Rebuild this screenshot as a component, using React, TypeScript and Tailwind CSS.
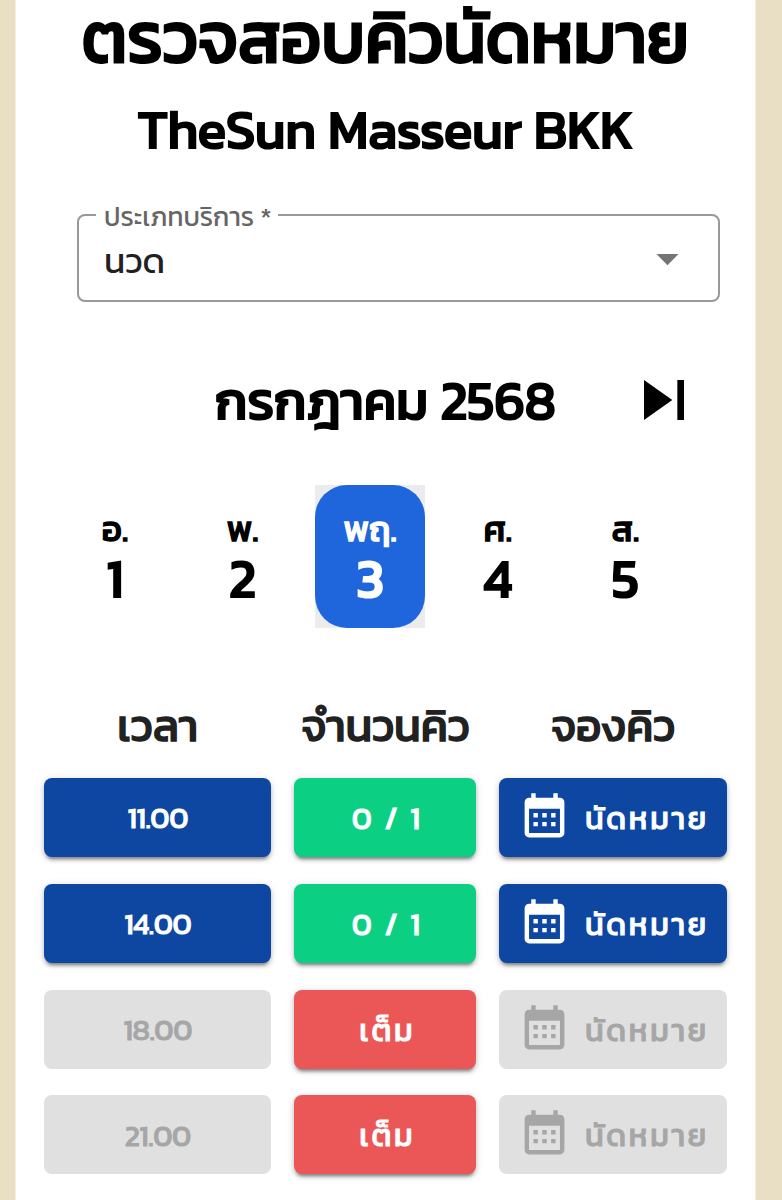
import { clsx } from "clsx";

type TDay = { name: string; date: number; active?: boolean };
type TSlot = { time: string; full: boolean };

const days: TDay[] = [
  { name: "อ.", date: 1 },
  { name: "พ.", date: 2 },
  { name: "พฤ.", date: 3, active: true },
  { name: "ศ.", date: 4 },
  { name: "ส.", date: 5 },
];

const slots: TSlot[] = [
  { time: "11.00", full: false },
  { time: "14.00", full: false },
  { time: "18.00", full: true },
  { time: "21.00", full: true },
];

// in-between weights, thickened from the regular cut
const medium = "[-webkit-text-stroke:0.034em_currentColor]";
const semibold = "[-webkit-text-stroke:0.042em_currentColor]";

const raised =
  "shadow-[0_5px_3px_-3px_rgba(0,0,0,0.3),0_3px_4px_rgba(0,0,0,0.2),0_1px_9px_rgba(0,0,0,0.12)]";

const CalendarIcon = () => (
  <svg viewBox="0 0 24 24" fill="currentColor" className="h-[53px] w-[53px] shrink-0">
    <path d="M9 10v2H7v-2h2m4 0v2h-2v-2h2m4 0v2h-2v-2h2m2-7a2 2 0 0 1 2 2v14a2 2 0 0 1-2 2H5a2 2 0 0 1-2-2V5a2 2 0 0 1 2-2h1V1h2v2h8V1h2v2h1m0 16V8H5v11h14M9 14v2H7v-2h2m4 0v2h-2v-2h2m4 0v2h-2v-2h2z" />
  </svg>
);

const SlotRow = ({ slot }: { slot: TSlot }) => {
  const bookable = slot.full
    ? "bg-[#e0e0e0] text-[#a6a6a6]"
    : clsx("bg-[#0d47a1] text-white", raised);

  return (
    <div className="grid h-[79px] grid-cols-[227.4px_182px_227.4px] gap-[23px]">
      <button
        className={clsx("rounded-lg pt-0.5 text-[29.5px] tracking-[-0.4px]", medium, bookable)}
      >
        {slot.time}
      </button>
      <button
        className={clsx(
          "rounded-lg pt-px pl-1 text-[30.8px] tracking-[2.75px] text-white",
          slot.full ? "bg-[#eb5757]" : "bg-[#0bd084]",
          medium,
          raised
        )}
      >
        {slot.full ? "เต็ม" : "0 / 1"}
      </button>
      <button
        className={clsx(
          "flex items-center rounded-lg pl-[18.5px] text-[30.8px] tracking-[2.75px]",
          medium,
          bookable
        )}
      >
        <CalendarIcon />
        <span className="ml-3.5 pt-px whitespace-nowrap">นัดหมาย</span>
      </button>
    </div>
  );
};

const App = () => {
  return (
    <div className="h-[1200px] overflow-hidden bg-[#e8dfc4] pl-[15px] font-['Kanit','Prompt','Noto_Sans_Thai','Noto_Sans',sans-serif]">
      <main className="h-full w-[741px] border-x border-[#f3eee0] bg-white text-black">
        <h1
          className={clsx(
            "flex h-[77px] items-center justify-center whitespace-nowrap text-[70.4px] leading-none",
            semibold
          )}
        >
          ตรวจสอบคิวนัดหมาย
        </h1>
        <h2
          className={clsx(
            "flex h-[107px] items-center justify-center whitespace-nowrap text-[52.8px] leading-none",
            semibold
          )}
        >
          TheSun Masseur BKK
        </h2>

        <fieldset className="mt-4 ml-[61px] h-[102px] w-[643px] rounded-lg border-2 border-[#999] pl-[17px]">
          <legend className="h-[30px] w-[182px] pl-2 text-[26.4px] leading-[34px] whitespace-nowrap text-[#666]">
            ประเภทบริการ *
          </legend>
          <div className="flex h-[57px] items-center justify-between pr-[24px] pl-2 text-[35px] leading-none text-[#212121]">
            <span className="pt-[3px]">นวด</span>
            <svg viewBox="0 0 24 24" fill="#757575" className="h-[53px] w-[53px]">
              <path d="m7 10 5 5 5-5z" />
            </svg>
          </div>
        </fieldset>

        <div className="mt-[58px] grid h-[80px] grid-cols-[1fr_345px_1fr] items-center">
          <h3
            className={clsx(
              "col-start-2 flex justify-center pt-0.5 text-[52.8px] leading-none whitespace-nowrap",
              semibold
            )}
          >
            กรกฎาคม 2568
          </h3>
          <svg viewBox="0 0 24 24" className="ml-[66px] h-[80px] w-[80px]">
            <path d="m6 18 8.5-6L6 6v12zM16 6v12h2V6h-2z" />
          </svg>
        </div>

        <div className="mt-[45px] ml-11 flex gap-[17.6px]">
          {days.map((day) => (
            <div key={day.date} className={clsx("w-[110px]", day.active && "bg-[#ececee]")}>
              <div
                className={clsx(
                  "flex h-[143px] flex-col items-center rounded-[32px] pt-[22px]",
                  day.active && "bg-[#1f66dc] text-white"
                )}
              >
                <span className={clsx("h-[45px] text-[35px] leading-[44px]", semibold)}>
                  {day.name}
                </span>
                <span className={clsx("h-[54px] text-[53px] leading-[54px]", semibold)}>
                  {day.date}
                </span>
              </div>
            </div>
          ))}
        </div>

        <div
          className={clsx(
            "mt-[55px] mb-[9px] ml-[28px] grid h-[86px] grid-cols-[227.4px_182px_227.4px] items-center gap-[23px] text-center text-[44px] leading-none whitespace-nowrap text-[#212121]",
            medium
          )}
        >
          <span>เวลา</span>
          <span>จำนวนคิว</span>
          <span>จองคิว</span>
        </div>
        <div className="ml-[28px] flex flex-col gap-[26.8px]">
          {slots.map((slot) => (
            <SlotRow key={slot.time} slot={slot} />
          ))}
        </div>
      </main>
    </div>
  );
};

export default App;
